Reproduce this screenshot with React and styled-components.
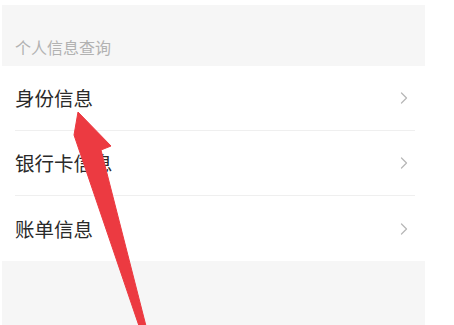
import styled, { createGlobalStyle } from "styled-components";

const GlobalStyle = createGlobalStyle`
  html, body {
    margin: 0;
    padding: 0;
    background: #ffffff;
  }
  body {
    font-family: "Noto Sans CJK SC", "Noto Sans", sans-serif;
  }
`;

const Page = styled.div`
  position: relative;
  width: 454px;
  height: 325px;
  overflow: hidden;
  padding: 5px 0 0 2px;
  box-sizing: border-box;
`;

const Panel = styled.div`
  width: 423px;
  height: 320px;
  background: #f6f6f6;
  display: flex;
  flex-direction: column;
`;

const SectionTitle = styled.div`
  height: 61px;
  box-sizing: border-box;
  padding: 22px 0 0 13px;
  display: flex;
  align-items: center;
  font-size: 16px;
  color: #b2b2b2;
  letter-spacing: 0;
`;

const List = styled.ul`
  margin: 0;
  padding: 0;
  list-style: none;
  background: #ffffff;
`;

const Row = styled.li`
  height: 65px;
  box-sizing: border-box;
  margin: 0 10px 0 13px;
  padding-right: 7px;
  display: flex;
  align-items: center;
  justify-content: space-between;
  border-bottom: ${(p) => (p.$last ? "none" : "1px solid #efefef")};
`;

const Label = styled.span`
  font-size: 19.5px;
  color: #2a2a2a;
  line-height: 1;
`;

const Chevron = () => (
  <svg width="8" height="12" viewBox="0 0 8 12">
    <polyline
      points="1.5,1 6.5,6 1.5,11"
      fill="none"
      stroke="#b8b8b8"
      strokeWidth="1.3"
      strokeLinecap="round"
      strokeLinejoin="round"
    />
  </svg>
);

const ArrowLayer = styled.svg`
  position: absolute;
  left: 0;
  top: 0;
  pointer-events: none;
`;

const items = ["身份信息", "银行卡信息", "账单信息"];

export default function App() {
  return (
    <>
      <GlobalStyle />
      <Page>
        <Panel>
          <SectionTitle>个人信息查询</SectionTitle>
          <List>
            {items.map((item, i) => (
              <Row key={item} $last={i === items.length - 1}>
                <Label>{item}</Label>
                <Chevron />
              </Row>
            ))}
          </List>
        </Panel>
        <ArrowLayer width="454" height="325" viewBox="0 0 454 325">
          <polygon
            points="78,112 111,146 101,150 146,326 139,326 74,135"
            fill="#ec3a41"
            stroke="#ec3a41"
            strokeWidth="1"
            strokeLinejoin="round"
          />
        </ArrowLayer>
      </Page>
    </>
  );
}
